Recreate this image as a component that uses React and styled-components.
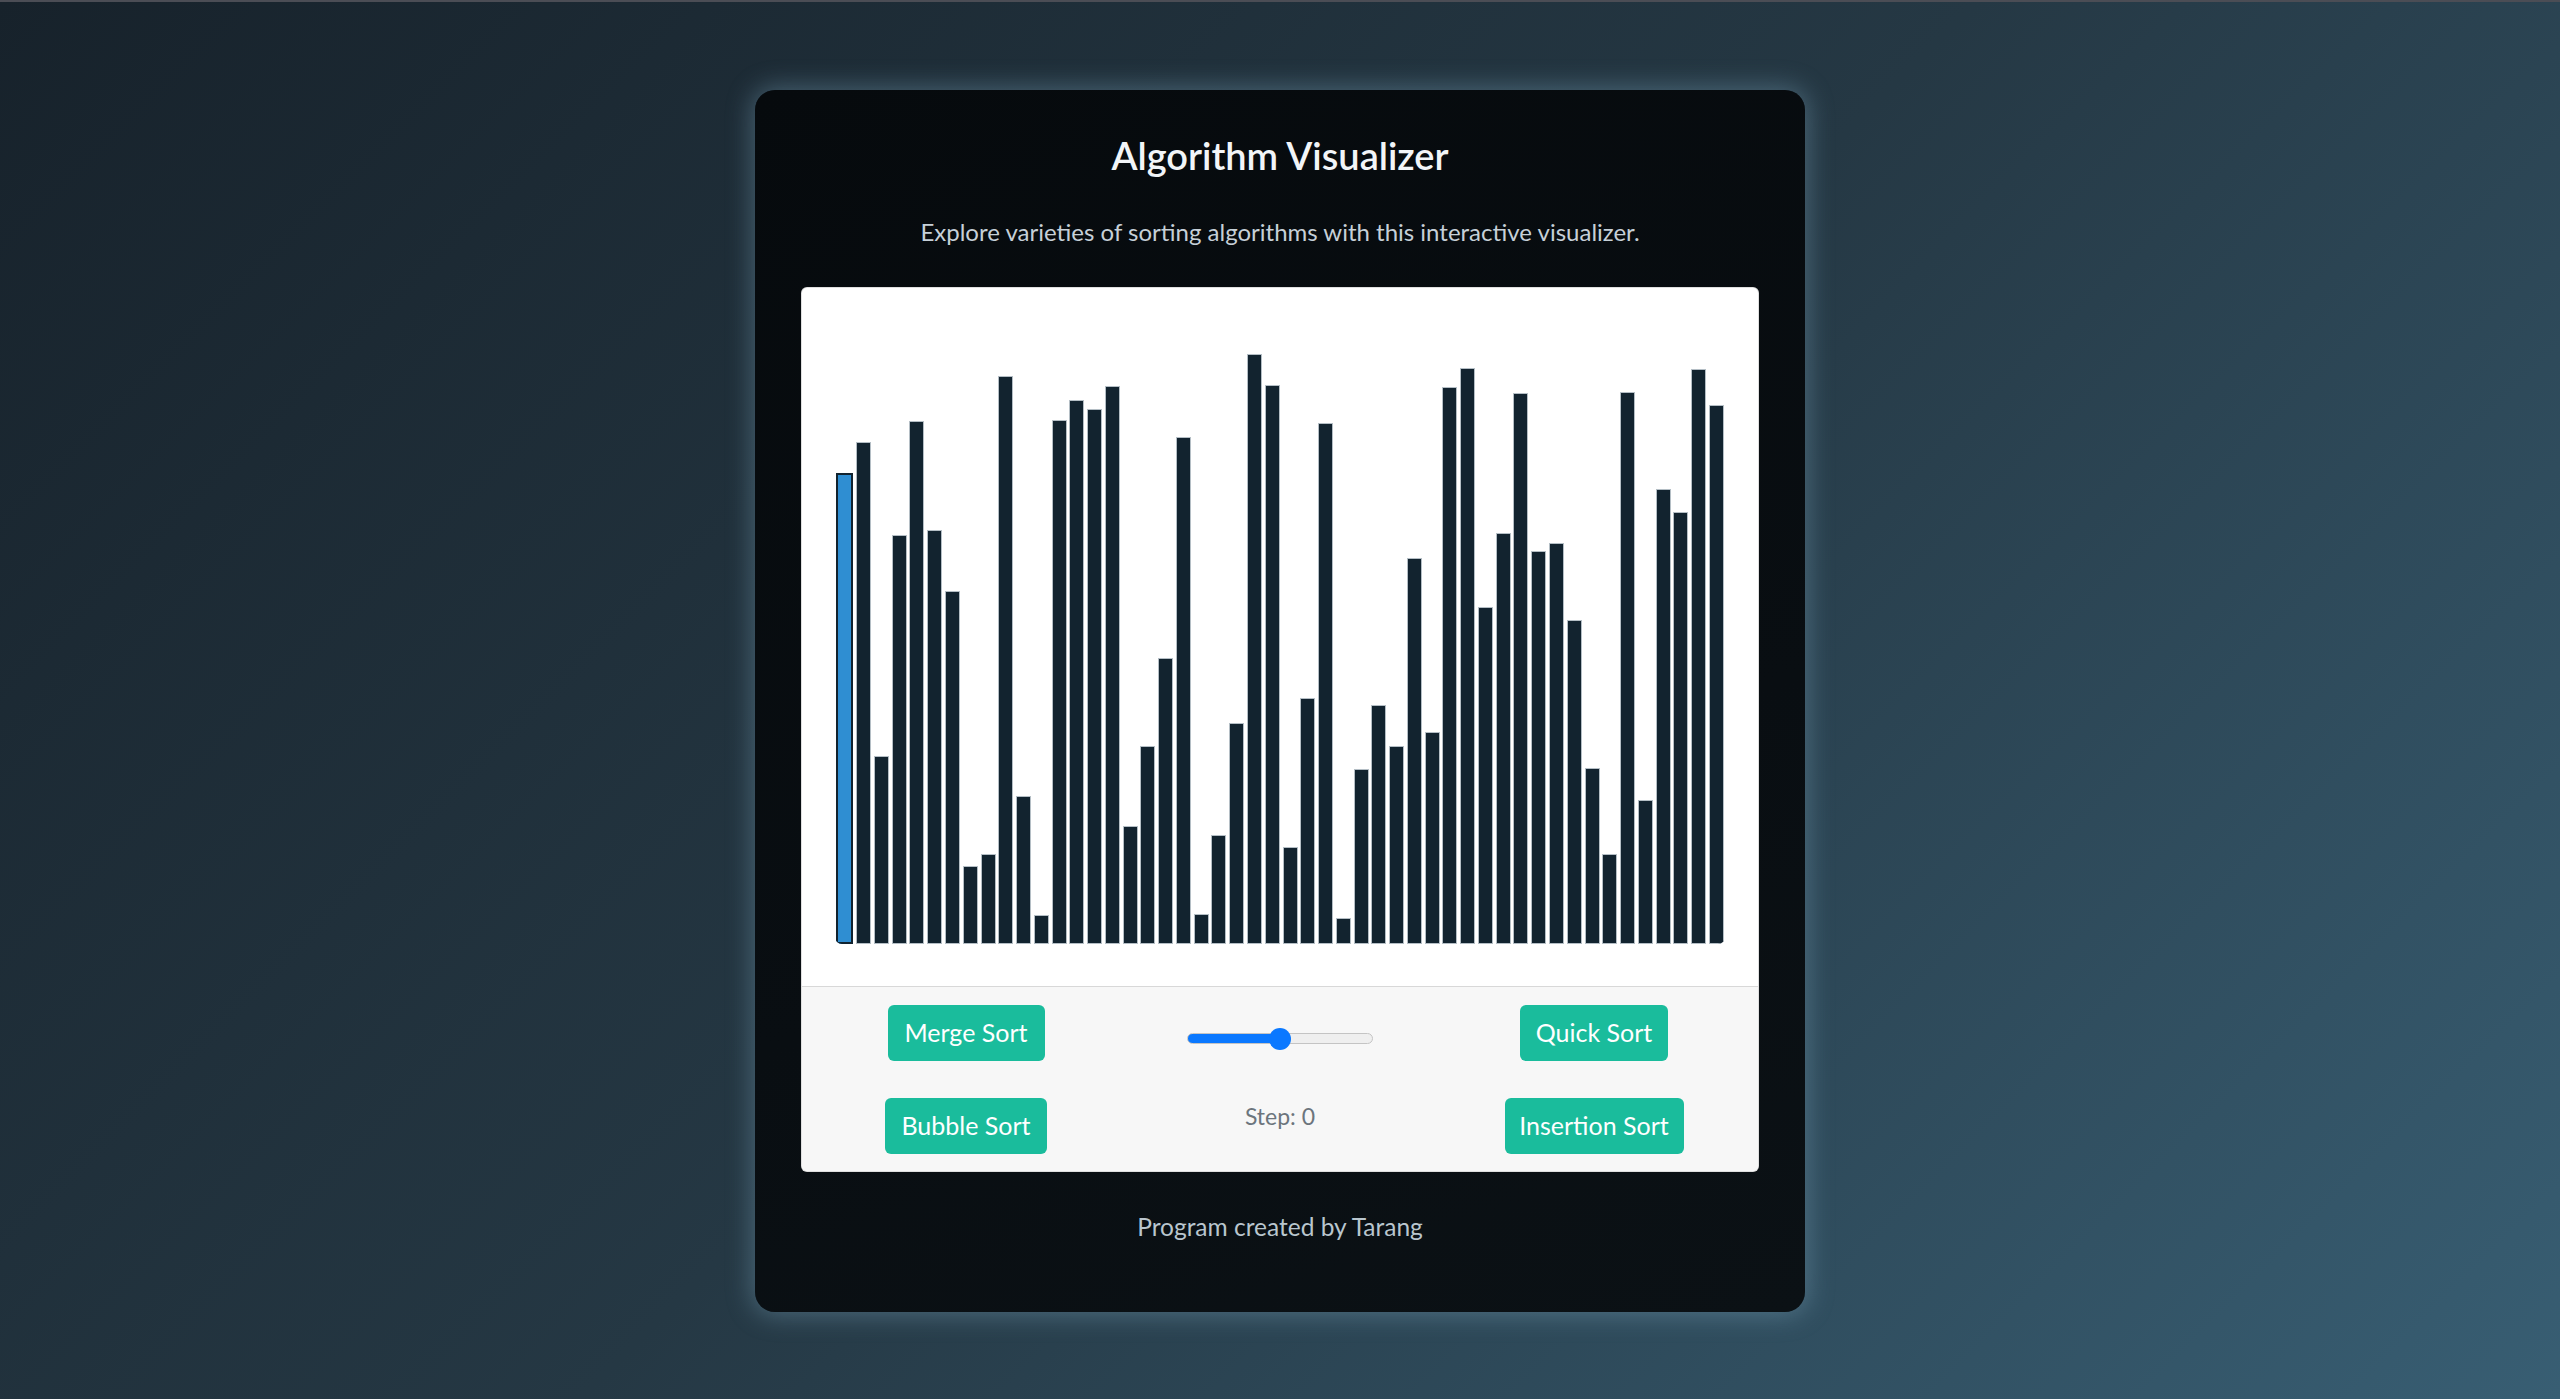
import React from 'react';
import styled, { createGlobalStyle } from 'styled-components';

const GlobalStyle = createGlobalStyle`
  html, body {
    margin: 0;
    padding: 0;
  }
  body {
    font-family: Lato, "Noto Sans", sans-serif;
    min-height: 1399px;
    box-sizing: border-box;
    border-top: 2px solid #4b4d55;
    background: linear-gradient(135deg, #17222b 0%, #253844 50%, #385e73 100%);
  }
`;

const Page = styled.div`
  display: flex;
  justify-content: center;
  padding-top: 88px;
`;

const Card = styled.div`
  width: 1050px;
  box-sizing: border-box;
  padding: 43px 46px 67px;
  border-radius: 20px;
  background: linear-gradient(160deg, #060a0d 0%, #090e12 60%, #0b1115 100%);
  box-shadow: 0 0 26px 3px rgba(120, 160, 182, 0.45);
  text-align: center;
`;

const Title = styled.h1`
  margin: 0;
  font-size: 38px;
  line-height: 1.2;
  font-weight: 600;
  color: #f2f5f8;
`;

const Subtitle = styled.p`
  margin: 35px 0 37px;
  font-size: 24px;
  line-height: 1.5;
  color: #c6d0d8;
`;

const Panel = styled.div`
  background: #fff;
  border: 1px solid rgba(0, 0, 0, 0.125);
  border-radius: 6px;
  overflow: hidden;
`;

const ChartArea = styled.div`
  height: 698px;
  box-sizing: border-box;
  padding: 56px 0 42px;
`;

const Bars = styled.div`
  width: 890px;
  height: 600px;
  margin: 0 auto;
  display: flex;
  align-items: flex-end;
  border-radius: 0 0 7px 7px;
  overflow: hidden;
`;

const Bar = styled.div`
  flex: 1;
  margin: 0 1.4px;
  box-sizing: border-box;
  background: ${p => (p.active ? '#2f8ed2' : '#12232f')};
  border: ${p => (p.active ? '2px solid #12232f' : '1px solid #b4bec5')};
`;

const Controls = styled.div`
  display: grid;
  grid-template-columns: repeat(3, 1fr);
  grid-auto-rows: 56px;
  row-gap: 37px;
  justify-items: center;
  align-items: center;
  padding: 18px 7px 17px;
  background: #f7f7f7;
  border-top: 1px solid rgba(0, 0, 0, 0.125);
`;

const SortButton = styled.button`
  width: ${p => p.w}px;
  height: 56px;
  padding: 0;
  border: none;
  border-radius: 6px;
  background: #1abc9c;
  color: #fff;
  font-family: inherit;
  font-size: 25px;
  line-height: 1.5;
  cursor: pointer;
`;

const Slider = styled.input`
  -webkit-appearance: none;
  appearance: none;
  width: 186px;
  height: 11px;
  margin: 12px 0 0;
  border-radius: 6px;
  border: 1px solid #c4c4c4;
  box-sizing: border-box;
  background: linear-gradient(to right, #0a78ff 0%, #0a78ff 50%, #efefef 50%, #efefef 100%);
  outline: none;

  &::-webkit-slider-thumb {
    -webkit-appearance: none;
    width: 22px;
    height: 22px;
    border-radius: 50%;
    background: #0a78ff;
    border: none;
  }
`;

const Step = styled.p`
  align-self: start;
  margin: 1px 0 0;
  font-size: 23px;
  line-height: 1.5;
  color: #6c757d;
`;

const Credit = styled.p`
  margin: 37px 0 0;
  font-size: 24.5px;
  line-height: 1.5;
  color: #b9c6ce;
`;

const heights = [
  471, 502, 188, 409, 523, 414, 353, 78, 90, 568,
  148, 29, 524, 544, 535, 558, 118, 198, 286, 507,
  30, 109, 221, 590, 559, 97, 246, 521, 26, 175,
  239, 198, 386, 212, 557, 576, 337, 411, 551, 393,
  401, 324, 176, 90, 552, 144, 455, 432, 575, 539,
];

export default function App() {
  return (
    <>
      <GlobalStyle />
      <Page>
        <Card>
          <Title>Algorithm Visualizer</Title>
          <Subtitle>Explore varieties of sorting algorithms with this interactive visualizer.</Subtitle>
          <Panel>
            <ChartArea>
              <Bars>
                {heights.map((h, i) => (
                  <Bar key={i} active={i === 0} style={{ height: h }} />
                ))}
              </Bars>
            </ChartArea>
            <Controls>
              <SortButton w={157}>Merge Sort</SortButton>
              <Slider type="range" min="0" max="100" defaultValue="50" />
              <SortButton w={148}>Quick Sort</SortButton>
              <SortButton w={162}>Bubble Sort</SortButton>
              <Step>Step: 0</Step>
              <SortButton w={179}>Insertion Sort</SortButton>
            </Controls>
          </Panel>
          <Credit>Program created by Tarang</Credit>
        </Card>
      </Page>
    </>
  );
}
